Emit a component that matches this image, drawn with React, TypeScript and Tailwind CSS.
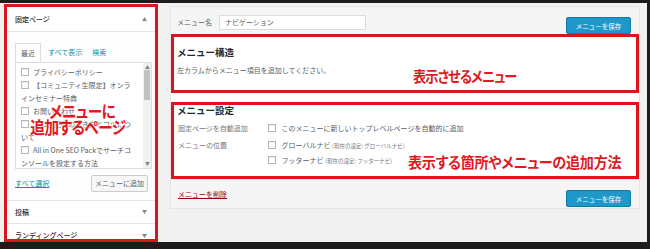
import React from "react";

// small gray accordion arrow
function Arrow({ up }: { up?: boolean }) {
    return (
        <svg width="5" height="4" viewBox="0 0 5 4" className="shrink-0">
            {up ? <polygon points="0,4 5,4 2.5,0" fill="#7e8993" /> : <polygon points="0,0 5,0 2.5,4" fill="#7e8993" />}
        </svg>
    );
}

function Box() {
    return <span className="inline-block w-[8px] h-[8px] border border-[#b4b9be] bg-white align-[-1px] mr-[4px] shadow-[inset_0_1px_1px_rgba(0,0,0,0.08)]" />;
}

function SaveButton() {
    return (
        <button className="w-[65px] h-[17px] rounded-[2px] bg-[#1f98c9] border border-[#127aa6] text-white text-[6.5px] leading-none">
            メニューを保存
        </button>
    );
}

export default function App() {
    return (
        <div className="w-[650px] h-[249px] bg-[#1c1c1c] pt-[3px] pr-[3px] pb-[7px] overflow-hidden font-['Noto_Sans_CJK_JP',sans-serif]">
            <div className="h-full bg-[#f1f1f1] flex items-start pl-[4px] pt-[1px]">
                {/* Left: pages accordion */}
                <aside className="relative w-[154px] h-[238px] border-[3px] border-[#d8161c] bg-white flex flex-col overflow-hidden">
                    <div className="h-[25px] shrink-0 flex items-center justify-between px-[8px] border-b border-[#e5e5e5]">
                        <span className="text-[7px] font-medium text-[#23282d]">固定ページ</span>
                        <Arrow up />
                    </div>

                    <div className="shrink-0 pl-[8px] pr-[3px] pt-[11px] pb-[8px] bg-[#fdfdfd] border-b border-[#e5e5e5]">
                        <div className="flex items-end h-[19px] text-[7px]">
                            <span className="h-full flex items-center px-[5px] border border-b-0 border-[#dddddd] bg-white text-[#555d66]">最近</span>
                            <span className="ml-[7px] mb-[5px] text-[#0f8fa3]">すべて表示</span>
                            <span className="ml-[10px] mb-[5px] text-[#0f8fa3]">検索</span>
                        </div>
                        <div className="h-[107px] flex border border-[#dddddd] bg-white">
                            <div className="flex-1 pl-[5px] pt-[3px] text-[7px] leading-[13px] text-[#555d66] whitespace-nowrap overflow-hidden">
                                <div><Box />プライバシーポリシー</div>
                                <div><Box />【コミュニティ生限定】オンラ<br />インセミナー特典</div>
                                <div><Box />お問い合わせ</div>
                                <div><Box />ブログ記事の書き方とコツにつ<br />いて</div>
                                <div><Box />All in One SEO Packでサーチコ<br />ンソールを設定する方法</div>
                            </div>
                            <div className="w-[8px] shrink-0 bg-[#f1f1f1] flex flex-col items-center py-[2px]">
                                <Arrow up />
                                <div className="w-[6px] h-[30px] bg-[#c1c1c1] mt-[1px]" />
                                <div className="flex-1" />
                                <Arrow />
                            </div>
                        </div>
                        <div className="flex items-center justify-between mt-[6px] pr-[4px] h-[17px]">
                            <span className="text-[7px] text-[#0f8fa3] underline">すべて選択</span>
                            <button className="w-[57px] h-[17px] border border-[#cccccc] bg-[#f7f7f7] rounded-[2px] text-[7px] text-[#555d66] leading-none">
                                メニューに追加
                            </button>
                        </div>
                    </div>

                    <div className="h-[23px] shrink-0 flex items-center justify-between px-[8px] border-b border-[#e5e5e5]">
                        <span className="text-[7px] font-medium text-[#23282d]">投稿</span>
                        <Arrow />
                    </div>
                    <div className="h-[23px] shrink-0 flex items-start justify-between px-[8px] pt-[6px]">
                        <span className="text-[7px] leading-[11px] font-medium text-[#23282d]">ランディングページ</span>
                        <span className="mt-[4px]"><Arrow /></span>
                    </div>

                    {/* annotation */}
                    <div className="absolute left-[1px] top-[96px] w-[140px] text-center text-[17px] leading-[16px] font-bold text-[#e01a1f] tracking-[-0.5px] scale-x-[0.86] [font-feature-settings:'palt'] [text-shadow:0_0_2px_#fff,0_0_2px_#fff]">
                        <div className="pl-[10px]">メニューに</div>
                        <div>追加するページ</div>
                    </div>
                </aside>

                {/* Right: menu edit panel */}
                <main className="ml-[12px] mt-[2px] w-[470px] flex flex-col border border-[#e5e5e5] bg-white">
                    <div className="h-[27px] flex items-center pt-[3px] pl-[6px] pr-[8px] bg-[#f5f5f5]">
                        <span className="text-[7px] text-[#555d66]">メニュー名</span>
                        <div className="ml-[7px] w-[147px] h-[15px] border border-[#dddddd] bg-white px-[5px] flex items-center text-[7px] text-[#555d66]">
                            ナビゲーション
                        </div>
                        <div className="ml-auto">
                            <SaveButton />
                        </div>
                    </div>

                    <section className="relative h-[59px] border-[3px] border-[#d8161c] px-[3px] pt-[9px]">
                        <h2 className="text-[9.5px] leading-[12px] font-bold text-[#23282d]">メニュー構造</h2>
                        <p className="mt-[7px] text-[7px] leading-[10px] text-[#555d66]">左カラムからメニュー項目を追加してください。</p>
                        <div className="absolute left-[239px] top-[31px] origin-left scale-x-[0.88] text-[15px] leading-[16px] font-bold text-[#e01a1f] tracking-[-1px] [font-feature-settings:'palt']">
                            表示させるメニュー
                        </div>
                    </section>

                    <div className="h-[9px]" />

                    <section className="relative h-[77px] border-[3px] border-[#d8161c] px-[3px]">
                        <h2 className="text-[9.5px] leading-[11px] font-bold text-[#23282d]">メニュー設定</h2>
                        <div className="mt-[5px] flex h-[14px] items-center pl-[1px] text-[7px]">
                            <span className="w-[90px] text-[#72777c]">固定ページを自動追加</span>
                            <span className="text-[#555d66]"><Box /> このメニューに新しいトップレベルページを自動的に追加</span>
                        </div>
                        <div className="mt-[3px] flex pl-[1px] text-[7px] leading-[14px]">
                            <span className="w-[90px] text-[#72777c]">メニューの位置</span>
                            <div className="text-[#555d66]">
                                <div><Box /> グローバルナビ <span className="text-[5.5px] text-[#72777c]">(現在の設定: グローバルナビ)</span></div>
                                <div><Box /> フッターナビ <span className="text-[5.5px] text-[#72777c]">(現在の設定: フッターナビ)</span></div>
                            </div>
                        </div>
                        <div className="absolute left-[234px] top-[49px] origin-left scale-x-[0.94] text-[15px] leading-[16px] font-bold text-[#e01a1f] tracking-[-0.3px] [font-feature-settings:'palt']">
                            表示する箇所やメニューの追加方法
                        </div>
                    </section>

                    <div className="h-[29px] flex items-center pl-[7px] pr-[8px] bg-[#f5f5f5] border-t border-[#e5e5e5]">
                        <span className="text-[7px] text-[#a00000] underline">メニューを削除</span>
                        <div className="ml-auto mt-[2px]">
                            <SaveButton />
                        </div>
                    </div>
                </main>
            </div>
        </div>
    );
}
